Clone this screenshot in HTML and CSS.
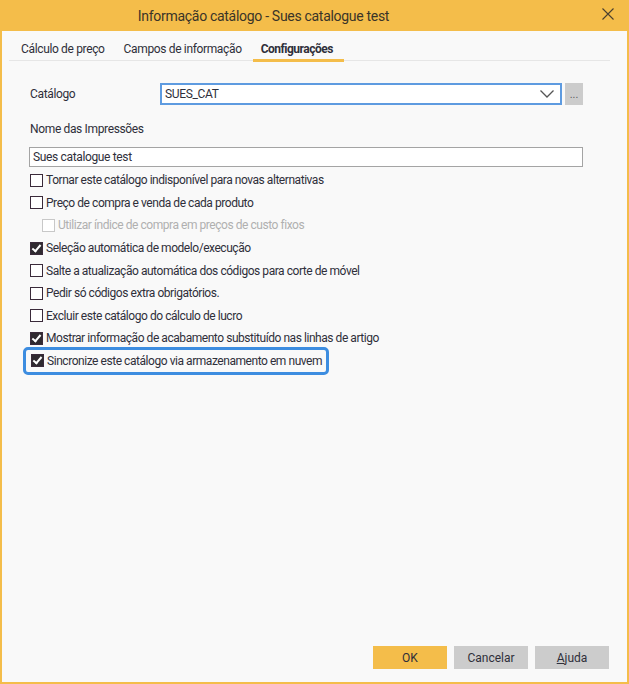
FILE: index.html
```html
<!DOCTYPE html>
<html lang="pt">
<head>
    <meta charset="UTF-8">
    <title>Informação catálogo</title>
    <link rel="stylesheet" href="styles.css">
</head>
<body>
    <div class="window">
        <div class="titlebar">
            <span class="title">Informação catálogo - Sues catalogue test</span>
            <span class="close">
                <svg width="12" height="12" viewBox="0 0 12 12"><path d="M0.5 0.5 L11.5 11.5 M11.5 0.5 L0.5 11.5" stroke="#4a4030" stroke-width="1.1" fill="none"/></svg>
            </span>
        </div>

        <div class="content">
            <div class="tabs">
                <span class="tab">Cálculo de preço</span>
                <span class="tab">Campos de informação</span>
                <span class="tab active">Configurações</span>
            </div>

            <div class="form">
                <div class="row-catalog">
                    <label class="label">Catálogo</label>
                    <div class="combo">
                        <span>SUES_CAT</span>
                        <svg width="14" height="8" viewBox="0 0 14 8"><path d="M0.5 0.5 L7 7 L13.5 0.5" stroke="#555" stroke-width="1.3" fill="none"/></svg>
                    </div>
                    <button class="dots">...</button>
                </div>

                <div class="label name-label">Nome das Impressões</div>
                <div class="textbox">Sues catalogue test</div>

                <div class="checks">
                    <div class="check"><span class="box"></span>Tornar este catálogo indisponível para novas alternativas</div>
                    <div class="check"><span class="box"></span>Preço de compra e venda de cada produto</div>
                    <div class="check sub disabled"><span class="box"></span>Utilizar índice de compra em preços de custo fixos</div>
                    <div class="check"><span class="box on"></span>Seleção automática de modelo/execução</div>
                    <div class="check"><span class="box"></span>Salte a atualização automática dos códigos para corte de móvel</div>
                    <div class="check"><span class="box"></span>Pedir só códigos extra obrigatórios.</div>
                    <div class="check"><span class="box"></span>Excluir este catálogo do cálculo de lucro</div>
                    <div class="check"><span class="box on"></span>Mostrar informação de acabamento substituído nas linhas de artigo</div>
                    <div class="check focused"><span class="box on"></span>Sincronize este catálogo via armazenamento em nuvem</div>
                </div>
            </div>

            <div class="footer">
                <button class="btn ok">OK</button>
                <button class="btn">Cancelar</button>
                <button class="btn"><u>A</u>juda</button>
            </div>
        </div>
    </div>
</body>
</html>
```

FILE: styles.css
```css
body {
    margin: 0;
    padding: 0;
    background-color: #ffffff;
    font-family: Roboto, 'Liberation Sans', sans-serif;
    font-size: 12px;
    line-height: 16px;
    letter-spacing: -0.35px;
    color: #2f2f3a;
}

.window {
    width: 629px;
    height: 684px;
    box-sizing: border-box;
    border: 2px solid #f4bd4a;
    border-top: none;
    background-color: #f9f9f9;
    display: flex;
    flex-direction: column;
}

.titlebar {
    height: 31px;
    margin: 0 -2px;
    padding-right: 102px;
    background-color: #f4bd4a;
    display: flex;
    align-items: center;
    justify-content: center;
    position: relative;
}

.title {
    font-size: 14px;
    letter-spacing: -0.3px;
    color: #3a3428;
}

.close {
    position: absolute;
    right: 15px;
    top: 8px;
}

.content {
    flex: 1;
    display: flex;
    flex-direction: column;
}

.tabs {
    display: flex;
    gap: 19px;
    margin: 7px 17px 0 7px;
    padding-left: 12px;
    border-bottom: 1px solid #e6e6e6;
    height: 22px;
}

.tab {
    padding-top: 3px;
    height: 19px;
}

.tab.active {
    font-weight: bold;
    letter-spacing: -0.5px;
    border-bottom: 3px solid #f4bd4a;
    margin-bottom: -2px;
    margin-left: -8px;
    padding: 3px 11px 0 8px;
    height: 18px;
}

.form {
    padding: 22px 44px 0 27px;
    flex: 1;
}

.row-catalog {
    display: flex;
    align-items: center;
}

.label {
    width: 130px;
    padding-left: 1px;
}

.combo {
    flex: 1;
    height: 18px;
    border: 2px solid #5e9be0;
    background-color: #fff;
    display: flex;
    align-items: center;
    justify-content: space-between;
    padding: 0 6px 0 3px;
}

.dots {
    width: 18px;
    height: 22px;
    margin-left: 3px;
    border: none;
    background-color: #cccccc;
    font-size: 10px;
    color: #555;
    padding: 0;
}

.name-label {
    margin-top: 16px;
    width: auto;
}

.textbox {
    margin-top: 10px;
    height: 18px;
    border: 1px solid #a4a4a4;
    background-color: #fff;
    padding-left: 3px;
    line-height: 18px;
}

.checks {
    margin-top: 2px;
    display: flex;
    flex-direction: column;
    letter-spacing: -0.45px;
}

.check {
    display: flex;
    align-items: center;
    height: 22.6px;
    white-space: nowrap;
}

.box {
    width: 11px;
    height: 11px;
    border: 1px solid #3a2a3a;
    background-color: #fff;
    margin: 0 3px 0 1px;
    position: relative;
}

.box.on {
    background-color: #2f2a30;
}

.box.on::after {
    content: '';
    position: absolute;
    left: 3px;
    top: 0px;
    width: 3px;
    height: 7px;
    border: solid #fff;
    border-width: 0 2px 2px 0;
    transform: rotate(40deg);
}

.check.sub {
    padding-left: 12px;
}

.check.disabled {
    color: #b0b0b0;
}

.check.disabled .box {
    border-color: #c8c8c8;
}

.check.focused {
    align-self: flex-start;
    margin-left: -6px;
    margin-top: -3px;
    padding: 0 4px;
    height: 22px;
    border: 3px solid #3d8de0;
    border-radius: 5px;
}

.footer {
    display: flex;
    justify-content: flex-end;
    gap: 7px;
    padding: 0 18px 13px 0;
}

.btn {
    width: 74px;
    height: 23px;
    border: none;
    background-color: #cccccc;
    font-family: inherit;
    font-size: 12px;
    color: #2f2f3a;
    padding: 0;
}

.btn.ok {
    background-color: #f4bd4a;
}
```
